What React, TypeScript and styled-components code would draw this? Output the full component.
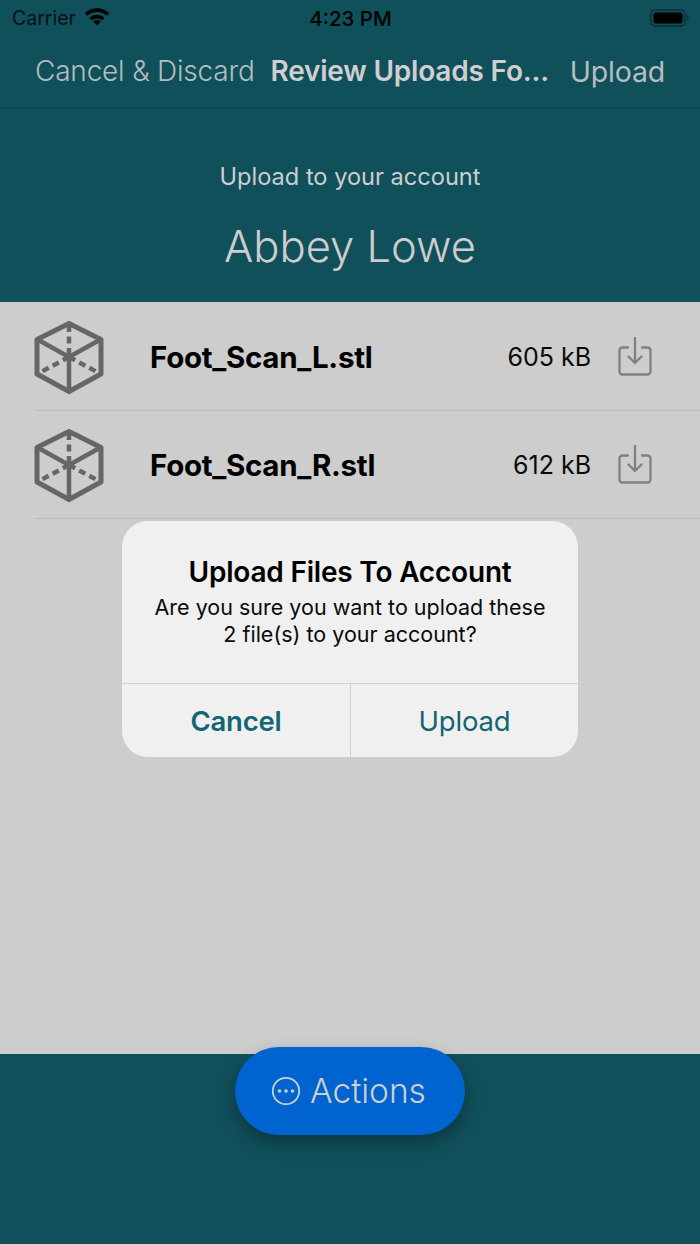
import React from 'react';
import styled, { createGlobalStyle } from 'styled-components';

const GlobalStyle = createGlobalStyle`
  html, body {
    margin: 0;
    padding: 0;
  }

  body {
    font-family: Inter, "Liberation Sans", sans-serif;
    -webkit-font-smoothing: antialiased;
  }
`;

const files = [
  { name: 'Foot_Scan_L.stl', size: '605 kB' },
  { name: 'Foot_Scan_R.stl', size: '612 kB' },
];

const WifiIcon = () => (
  <svg width="26" height="19" viewBox="0 0 26 19">
    <path d="M2 7.500 A16 16 0 0 1 24 7.500" fill="none" stroke="#000" strokeWidth="3.600" />
    <path d="M6.500 12 A10 10 0 0 1 19.500 12" fill="none" stroke="#000" strokeWidth="3.600" />
    <path d="M13 18.500 L9.300 14.600 A5.400 5.400 0 0 1 16.700 14.600 Z" fill="#000" />
  </svg>
);

const BatteryIcon = () => (
  <svg width="40" height="20" viewBox="0 0 40 20">
    <rect x="1" y="2" width="34" height="16" rx="4" fill="none" stroke="#0a2e35" strokeWidth="1.500" />
    <rect x="3.500" y="4.500" width="29" height="11" rx="2" fill="#000" />
    <path d="M37 7.500c1 .3 1.500 1.200 1.500 2.500s-.5 2.200-1.500 2.500z" fill="#0a2e35" />
  </svg>
);

const CubeIcon = () => (
  <svg width="70" height="74" viewBox="0 0 70 74" fill="none" stroke="#666" strokeLinejoin="round">
    <path d="M35 2.500 L67 18.500 V53 L35 70.500 L3 53 V18.500 Z" strokeWidth="5" />
    <path d="M3.500 18.500 L35 36 L66.500 18.500 M35 36 V70" strokeWidth="4.500" />
    <path d="M35 4 V36 M35 36 L5 52 M35 36 L65 52" strokeWidth="4.500" strokeDasharray="7 4.500" />
  </svg>
);

const ImportIcon = () => (
  <svg width="34" height="40" viewBox="0 0 34 40" fill="none" stroke="#808080" strokeWidth="2.300" strokeLinecap="round" strokeLinejoin="round">
    <path d="M10 10.500 H4.500 A3 3 0 0 0 1.500 13.500 V34.500 A3 3 0 0 0 4.500 37.500 H29.500 A3 3 0 0 0 32.500 34.500 V13.500 A3 3 0 0 0 29.500 10.500 H24" />
    <path d="M17 1 V26 M10.500 19.500 L17 26 L23.500 19.500" />
  </svg>
);

const MoreIcon = () => (
  <svg width="30" height="30" viewBox="0 0 30 30" fill="none">
    <circle cx="15" cy="15" r="13.200" stroke="#cfcfcf" strokeWidth="1.800" />
    <circle cx="8.500" cy="15" r="1.800" fill="#cfcfcf" />
    <circle cx="15" cy="15" r="1.800" fill="#cfcfcf" />
    <circle cx="21.500" cy="15" r="1.800" fill="#cfcfcf" />
  </svg>
);

const App = () => (
  <>
    <GlobalStyle />
    <Page>
      <TopBar>
        <StatusBar>
          <Carrier>
            <span>Carrier</span>
            <WifiIcon />
          </Carrier>
          <Clock>4:23 PM</Clock>
          <Battery>
            <BatteryIcon />
          </Battery>
        </StatusBar>
        <NavBar>
          <NavAction>Cancel &amp; Discard</NavAction>
          <NavTitle>Review Uploads Fo...</NavTitle>
          <NavAction $strong>Upload</NavAction>
        </NavBar>
      </TopBar>

      <AccountHeader>
        <AccountLabel>Upload to your account</AccountLabel>
        <AccountName>Abbey Lowe</AccountName>
      </AccountHeader>

      <FileList>
        {files.map((file) => (
          <FileRow key={file.name}>
            <CubeWrap>
              <CubeIcon />
            </CubeWrap>
            <RowBody>
              <FileName>{file.name}</FileName>
              <FileSize>{file.size}</FileSize>
              <ImportWrap>
                <ImportIcon />
              </ImportWrap>
            </RowBody>
          </FileRow>
        ))}
      </FileList>

      <Footer />

      <ActionsButton>
        <MoreIcon />
        <span>Actions</span>
      </ActionsButton>

      <Dialog>
        <DialogBody>
          <DialogTitle>Upload Files To Account</DialogTitle>
          <DialogMessage>
            Are you sure you want to upload these
            <br />
            2 file(s) to your account?
          </DialogMessage>
        </DialogBody>
        <DialogButtons>
          <DialogButton $bold>Cancel</DialogButton>
          <DialogButton>Upload</DialogButton>
        </DialogButtons>
      </Dialog>
    </Page>
  </>
);

const Page = styled.div`
  position: relative;
  width: 700px;
  height: 1244px;
  overflow: hidden;
  display: flex;
  flex-direction: column;
  background-color: #10505b;
`;

const TopBar = styled.header`
  height: 108px;
  flex-shrink: 0;
  border-bottom: 1px solid #0d4651;
  display: flex;
  flex-direction: column;
`;

const StatusBar = styled.div`
  height: 36px;
  padding: 0 10px 0 12px;
  display: grid;
  grid-template-columns: 1fr auto 1fr;
  align-items: center;
  color: #000;
`;

const Carrier = styled.div`
  display: flex;
  align-items: center;
  gap: 8px;
  font-size: 19.500px;
  color: #041215;

  svg {
    margin-top: -4px;
  }
`;

const Clock = styled.div`
  margin-right: 1px;
  font-size: 20.500px;
  font-weight: 500;
  color: #000;
`;

const Battery = styled.div`
  display: flex;
  justify-content: flex-end;
`;

const NavBar = styled.nav`
  flex: 1;
  padding: 0 35px 2px;
  display: flex;
  align-items: center;
  justify-content: space-between;
  white-space: nowrap;
`;

const NavAction = styled.span<{ $strong?: boolean }>`
  font-size: ${(p) => (p.$strong ? '28.500px' : '28px')};
  font-weight: ${(p) => (p.$strong ? 400 : 300)};
  letter-spacing: -0.2px;
  color: #b3bebf;
`;

const NavTitle = styled.span`
  margin-right: 5px;
  font-size: 28px;
  font-weight: 600;
  letter-spacing: -0.2px;
  color: #cfcfcf;
`;

const AccountHeader = styled.section`
  height: 193px;
  flex-shrink: 0;
  display: flex;
  flex-direction: column;
  align-items: center;
  padding-top: 54px;
  box-sizing: border-box;
  color: #cbcfcf;
`;

const AccountLabel = styled.div`
  font-size: 23.600px;
  line-height: 28px;
`;

const AccountName = styled.div`
  margin-top: 28px;
  font-size: 43.500px;
  font-weight: 300;
  line-height: 54px;
  color: #cdcdcd;
`;

const FileList = styled.ul`
  height: 752px;
  flex-shrink: 0;
  margin: 0;
  padding: 1px 0 0 34px;
  box-sizing: border-box;
  list-style: none;
  background-color: #cdcdcd;
`;

const FileRow = styled.li`
  height: 108px;
  box-sizing: border-box;
  border-bottom: 1px solid #bcbcbc;
  display: flex;
  align-items: center;
`;

const CubeWrap = styled.div`
  width: 116px;
  flex-shrink: 0;
  padding-top: 2px;
  display: flex;
`;

const RowBody = styled.div`
  flex: 1;
  display: flex;
  align-items: center;
  padding-right: 48px;
`;

const FileName = styled.span`
  flex: 1;
  font-size: 29.500px;
  font-weight: 700;
  letter-spacing: -0.3px;
  color: #000;
`;

const FileSize = styled.span`
  font-size: 25px;
  color: #0a0a0a;
`;

const ImportWrap = styled.div`
  width: 34px;
  margin-left: 27px;
  display: flex;
`;

const Footer = styled.footer`
  flex: 1;
`;

const ActionsButton = styled.button`
  position: absolute;
  left: 235px;
  top: 1047px;
  width: 230px;
  height: 88px;
  padding: 0 3px 0 0;
  border: none;
  border-radius: 44px;
  display: flex;
  align-items: center;
  justify-content: center;
  gap: 9px;
  background-color: #0064d0;
  box-shadow: 0 8px 18px rgba(0, 0, 0, 0.3);
  font-family: inherit;
  font-size: 33.500px;
  font-weight: 300;
  color: #cfcfcf;
`;

const Dialog = styled.div`
  position: absolute;
  left: 122px;
  top: 521px;
  width: 456px;
  height: 236px;
  border-radius: 26px;
  overflow: hidden;
  display: flex;
  flex-direction: column;
  background-color: #f0f0f0;
`;

const DialogBody = styled.div`
  height: 163px;
  flex-shrink: 0;
  padding-top: 34px;
  box-sizing: border-box;
  text-align: center;
  border-bottom: 1px solid #d2d2d2;
`;

const DialogTitle = styled.div`
  font-size: 28px;
  font-weight: 600;
  line-height: 34px;
  letter-spacing: -0.2px;
  color: #000;
`;

const DialogMessage = styled.div`
  margin-top: 5px;
  font-size: 21.500px;
  line-height: 27px;
  color: #0a0a0a;
`;

const DialogButtons = styled.div`
  flex: 1;
  display: grid;
  grid-template-columns: 1fr 1fr;
`;

const DialogButton = styled.div<{ $bold?: boolean }>`
  display: flex;
  align-items: center;
  justify-content: center;
  font-size: 27.500px;
  font-weight: ${(p) => (p.$bold ? 600 : 400)};
  letter-spacing: -0.2px;
  color: #126674;

  & + & {
    border-left: 1px solid #d2d2d2;
  }
`;

export default App;
